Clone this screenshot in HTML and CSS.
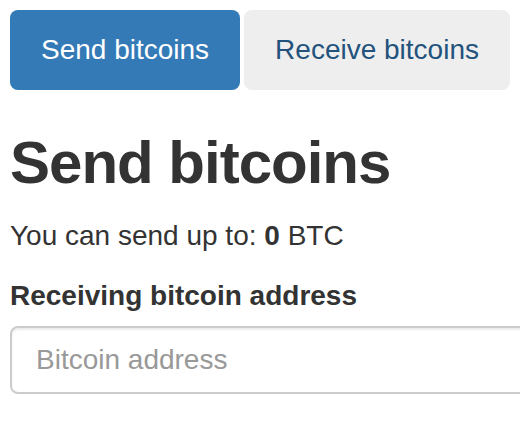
FILE: index.html
```html
<!DOCTYPE html>
<html>
<head>
<meta charset="utf-8">
<link rel="stylesheet" href="styles.css">
</head>
<body>
<div class="page">
  <ul class="nav-pills">
    <li class="pill active"><a href="#">Send bitcoins</a></li>
    <li class="pill"><a href="#">Receive bitcoins</a></li>
  </ul>
  <h2 class="title">Send bitcoins</h2>
  <p class="balance">You can send up to: <strong>0</strong> BTC</p>
  <div class="form-group">
    <label class="label" for="addr">Receiving bitcoin address</label>
    <input id="addr" class="input" type="text" placeholder="Bitcoin address">
  </div>
</div>
</body>
</html>
```
FILE: styles.css
```css
html, body {
  margin: 0;
  padding: 0;
  background: #fff;
}
body {
  font-family: "Liberation Sans", Arial, sans-serif;
  font-size: 28px;
  line-height: 40px;
  color: #333;
}
.page {
  padding: 10px;
  overflow: hidden;
}
.nav-pills {
  list-style: none;
  margin: 0;
  padding: 0;
  display: flex;
  gap: 4px;
}
.pill a {
  display: block;
  padding: 20px 31px;
  border-radius: 8px;
  text-decoration: none;
  background: #eee;
  color: #23527c;
}
.pill.active a {
  background: #337ab7;
  color: #fff;
}
.title {
  font-size: 60px;
  font-weight: bold;
  letter-spacing: -1px;
  line-height: 66px;
  margin: 40px 0 20px;
}
.balance {
  margin: 0 0 20px;
}
.label {
  display: inline-block;
  font-weight: bold;
  margin-bottom: 10px;
}
.input {
  display: block;
  box-sizing: border-box;
  width: calc(100% + 40px);
  height: 68px;
  padding: 12px 24px;
  font-family: inherit;
  font-size: 28px;
  line-height: 40px;
  color: #555;
  border: 2px solid #ccc;
  border-radius: 8px;
  box-shadow: inset 0 2px 2px rgba(0,0,0,.075);
  outline: none;
}
.input::placeholder {
  color: #999;
}
```
